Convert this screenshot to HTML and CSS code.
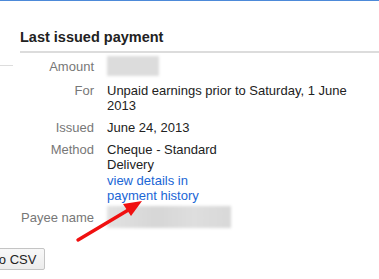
FILE: index.html
```html
<!DOCTYPE html>
<html lang="en">
<head>
    <meta charset="UTF-8">
    <title>Last issued payment</title>
    <link rel="stylesheet" href="styles.css">
</head>
<body>
    <div class="page">
        <div class="side"></div>
        <div class="main">
            <h2>Last issued payment</h2>
            <div class="details">
                <div class="label">Amount</div>
                <div class="value"><span class="blur blur-amount"></span></div>

                <div class="label">For</div>
                <div class="value">Unpaid earnings prior to Saturday, 1 June<br>2013</div>

                <div class="label">Issued</div>
                <div class="value">June 24, 2013</div>

                <div class="label">Method</div>
                <div class="value">Cheque - Standard<br>Delivery<br><a href="#" class="link">view details in<br>payment history</a></div>

                <div class="label">Payee name</div>
                <div class="value"><span class="blur blur-payee"></span></div>
            </div>
        </div>
    </div>
    <div class="actions">
        <button class="btn">Export to CSV</button>
    </div>

    <svg class="arrow" width="90" height="60" viewBox="0 0 90 60">
        <line x1="10" y1="50" x2="62" y2="19" stroke="#f01010" stroke-width="3.4" stroke-linecap="round"/>
        <polygon points="74,11 55,14 63,26" fill="#f01010"/>
    </svg>
</body>
</html>
```

FILE: styles.css
```css
body {
    margin: 0;
    border-top: 1px solid #4d8ad9;
    font-family: Arial, "Liberation Sans", sans-serif;
    font-size: 13px;
    color: #222;
    background: white;
    position: relative;
    height: 278px;
    overflow: hidden;
}
.page {
    display: flex;
}
.side {
    width: 13px;
    height: 64px;
    border-bottom: 1px solid #ddd;
    flex-shrink: 0;
}
.main {
    flex: 1;
    margin-left: 7px;
}
h2 {
    font-size: 14.5px;
    font-weight: bold;
    margin: 28px 0 0;
    padding-bottom: 6px;
    line-height: 16px;
    border-bottom: 2px solid #dcdcdc;
    color: #222;
}
.details {
    display: grid;
    grid-template-columns: 74px 1fr;
    column-gap: 13px;
    row-gap: 7px;
    line-height: 15px;
    padding-top: 6px;
}
.label {
    text-align: right;
    color: #777;
}
.link {
    color: #1a66d6;
    text-decoration: none;
    display: inline-block;
    margin-top: 1px;
}
.blur {
    display: block;
    background: #dcdcdc;
    filter: blur(1.5px);
}
.blur-amount {
    width: 52px;
    height: 20px;
    margin-top: -3px;
}
.blur-payee {
    width: 124px;
    height: 22px;
    margin-top: -4px;
    background: linear-gradient(90deg, #e2e2e2, #d6d6d6 40%, #dedede 70%, #d8d8d8);
}
.actions {
    margin-top: 20px;
}
.btn {
    margin-left: -55px;
    font-family: Arial, "Liberation Sans", sans-serif;
    font-size: 13px;
    color: #222;
    padding: 0 8px;
    height: 22px;
    border: 1px solid #c4c4c4;
    border-radius: 2px;
    background: linear-gradient(#f8f8f8, #ececec);
}
.arrow {
    position: absolute;
    left: 68px;
    top: 189px;
}
```
